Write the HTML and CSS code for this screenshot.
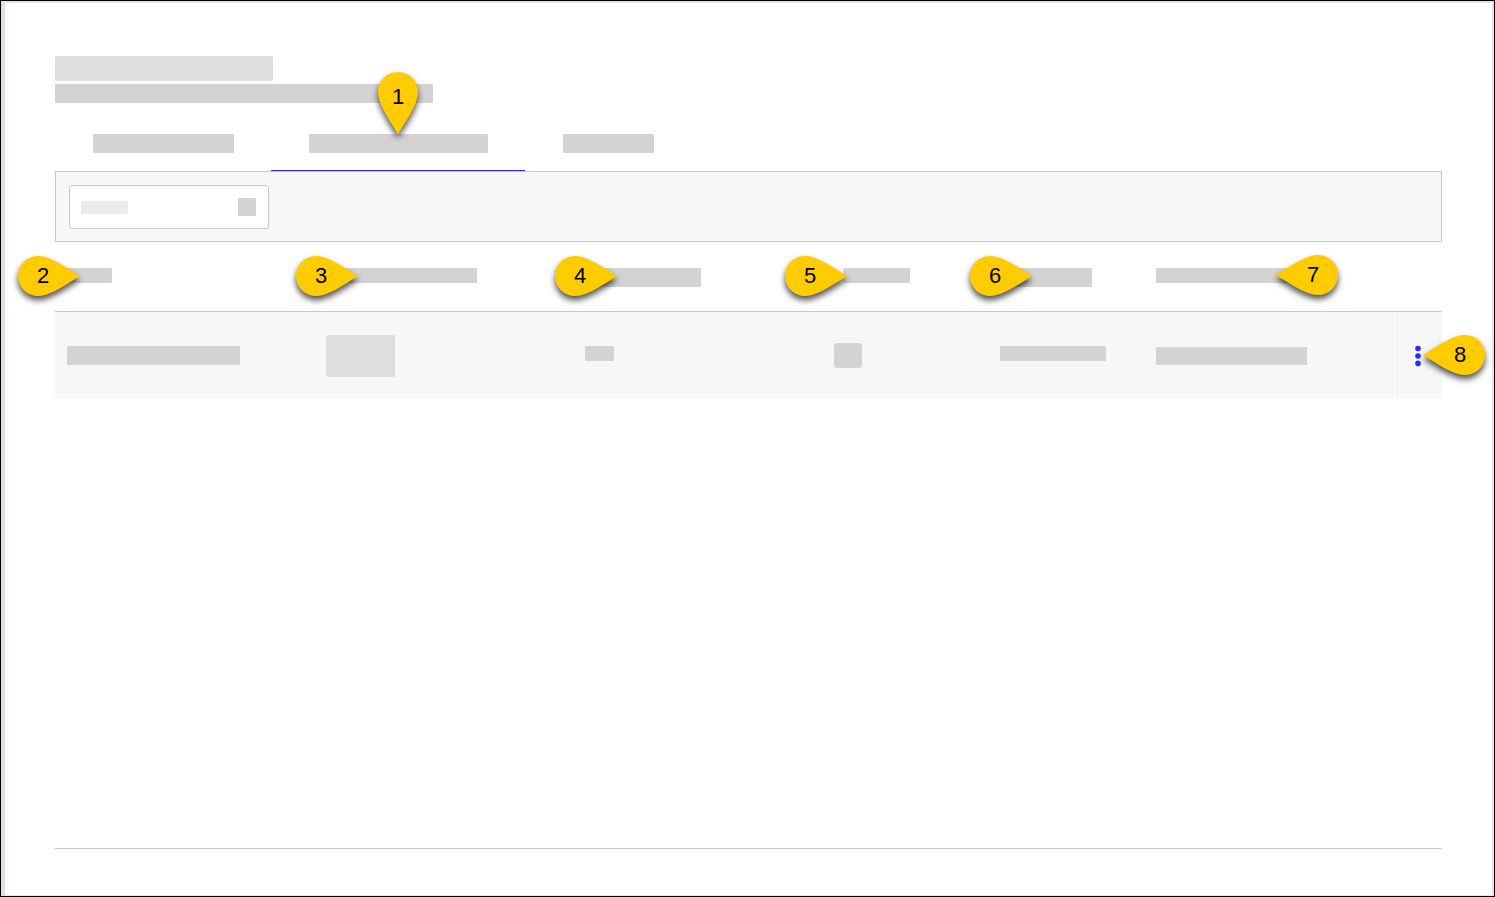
FILE: index.html
```html
<!DOCTYPE html>
<html lang="en">
<head>
  <meta charset="UTF-8" />
  <meta name="viewport" content="width=device-width, initial-scale=1.0" />
  <title>Overview</title>
  <link rel="stylesheet" href="styles.css">
</head>
<body>
  <!-- marker shapes -->
  <svg class="defs" aria-hidden="true">
    <symbol id="pin-right" viewBox="0 0 62 40">
      <path d="M62 20 C42 7 30 0 20 0 A20 20 0 0 0 20 40 C30 40 42 33 62 20Z" />
    </symbol>
    <symbol id="pin-left" viewBox="0 0 62 40">
      <path d="M0 20 C20 7 32 0 42 0 A20 20 0 0 1 42 40 C32 40 20 33 0 20Z" />
    </symbol>
    <symbol id="pin-down" viewBox="0 0 42 62">
      <path d="M21 62 C8 42 1 30 1 20 A20 20 0 0 1 41 20 C41 30 34 42 21 62Z" />
    </symbol>
  </svg>

  <main class="page">
    <header>
      <div class="bar title"></div>
      <div class="bar subtitle"></div>
    </header>

    <nav class="tabs">
      <div class="tab-item">
        <button class="tab" type="button" aria-label="First tab"><span class="bar tab-short"></span></button>
      </div>
      <div class="tab-item">
        <button class="tab active" type="button" aria-label="Second tab"><span class="bar tab-long"></span></button>
        <span class="pin down"><svg><use href="#pin-down" /></svg><b>1</b></span>
      </div>
      <div class="tab-item">
        <button class="tab" type="button" aria-label="Third tab"><span class="bar tab-tiny"></span></button>
      </div>
    </nav>

    <section class="filters">
      <label class="field">
        <span class="bar hint"></span>
        <input type="text" aria-label="Filter" />
        <span class="bar field-icon"></span>
      </label>
    </section>

    <table>
      <colgroup>
        <col class="col-name" />
        <col class="col-type" />
        <col class="col-count" />
        <col class="col-flag" />
        <col class="col-owner" />
        <col />
        <col class="col-menu" />
      </colgroup>
      <thead>
        <tr>
          <th><div class="bar head-name"></div><span class="pin right far"><svg><use href="#pin-right" /></svg><b>2</b></span></th>
          <th><div class="bar head-type"></div><span class="pin right"><svg><use href="#pin-right" /></svg><b>3</b></span></th>
          <th><div class="bar head-count"></div><span class="pin right"><svg><use href="#pin-right" /></svg><b>4</b></span></th>
          <th><div class="bar head-flag"></div><span class="pin right far"><svg><use href="#pin-right" /></svg><b>5</b></span></th>
          <th><div class="bar head-owner"></div><span class="pin right"><svg><use href="#pin-right" /></svg><b>6</b></span></th>
          <th><div class="bar head-date"></div><span class="pin left head-pin"><svg><use href="#pin-left" /></svg><b>7</b></span></th>
          <th></th>
        </tr>
      </thead>
      <tbody>
        <tr>
          <td><div class="bar cell-name"></div></td>
          <td><div class="bar cell-type"></div></td>
          <td><div class="bar cell-count"></div></td>
          <td><div class="bar cell-flag"></div></td>
          <td><div class="bar cell-owner"></div></td>
          <td><div class="bar cell-date"></div></td>
          <td class="menu">
            <button class="menu-button" type="button" aria-label="More actions">
              <svg width="8" height="22" viewBox="0 0 8 22">
                <circle cx="4" cy="3.5" r="2.8" />
                <circle cx="4" cy="11" r="2.8" />
                <circle cx="4" cy="18.4" r="2.8" />
              </svg>
            </button>
            <span class="pin left menu-pin"><svg><use href="#pin-left" /></svg><b>8</b></span>
          </td>
        </tr>
      </tbody>
    </table>

    <hr />
  </main>
</body>
</html>
```

FILE: styles.css
```css
* {
  box-sizing: border-box;
}
body {
  margin: 0;
  min-height: 100vh;
  display: flex;
  border: 1px solid #000;
  font-family: "Liberation Sans", Arial, sans-serif;
  background-color: #fff;
}
.defs {
  position: absolute;
  width: 0;
  height: 0;
}
.page {
  flex: 1;
  display: flex;
  flex-direction: column;
  padding: 53px 50px 46px;
  border: 1px solid #e4e4e4;
  border-width: 2px 2px 1px 4px;
  border-left-color: #e4dfdf;
}

/* placeholder blocks */
.bar {
  display: block;
  height: 15px;
  border-radius: 1px;
  background-color: #d3d3d3;
}
.title {
  width: 218px;
  height: 25px;
  margin-bottom: 3px;
  background-color: #dedede;
}
.subtitle {
  width: 378px;
  height: 19px;
}

/* tabs */
.tabs {
  display: flex;
  margin-top: 13px;
}
.tab-item {
  position: relative;
}
.tab {
  display: block;
  padding: 18px 37px 17px 38px;
  border: none;
  border-bottom: 1px solid transparent;
  background: none;
  cursor: pointer;
}
.tab.active {
  border-bottom-color: #2b2bff;
}
.tab .bar {
  height: 19px;
}
.tab-short {
  width: 141px;
}
.tab-long {
  width: 179px;
}
.tab-tiny {
  width: 91px;
}

/* filters */
.filters {
  padding: 13px 13px 12px;
  border: 1px solid #c8c8c8;
  background-color: #f7f7f7;
}
.field {
  display: flex;
  align-items: center;
  width: 200px;
  height: 44px;
  padding: 0 12px 0 11px;
  border: 1px solid #c8c8c8;
  border-radius: 3px;
  background-color: #fff;
}
.field input {
  flex: 1;
  min-width: 0;
  height: 30px;
  padding: 0;
  border: none;
  outline: none;
  background: none;
}
.hint {
  width: 47px;
  height: 13px;
  background-color: #ebebeb;
}
.field-icon {
  width: 18px;
  height: 18px;
}

/* table */
table {
  width: 100%;
  table-layout: fixed;
  border-spacing: 0;
}
.col-name, .col-type {
  width: 259px;
}
.col-count {
  width: 249px;
}
.col-flag {
  width: 166px;
}
.col-owner {
  width: 156px;
}
.col-menu {
  width: 48px;
}
th, td {
  position: relative;
  padding: 0 0 0 12px;
}
th {
  height: 70px;
  padding-top: 26px;
  vertical-align: top;
  border-bottom: 1px solid #c8c8c8;
}
td {
  height: 87px;
  background-color: #f7f7f7;
}
.head-name {
  width: 45px;
}
.head-type {
  width: 151px;
}
.head-count {
  width: 116px;
  height: 19px;
}
.head-flag {
  width: 67px;
  margin-left: 9px;
}
.head-owner {
  width: 92px;
  height: 19px;
}
.head-date {
  width: 140px;
}
.cell-name {
  width: 173px;
  height: 19px;
}
.cell-type {
  width: 69px;
  height: 42px;
  border-radius: 2px;
  background-color: #dedede;
}
.cell-count, .cell-owner {
  width: 29px;
  margin-bottom: 4px;
}
.cell-flag {
  width: 28px;
  height: 25px;
  border-radius: 3px;
}
.cell-owner {
  width: 106px;
}
.cell-date {
  width: 151px;
  height: 18px;
}
.menu {
  padding: 0 2px 0 0;
  border-left: 1px solid #fff;
}
.menu-button {
  display: block;
  margin: 0 auto;
  padding: 0;
  border: none;
  background: none;
  cursor: pointer;
}
.menu-button svg {
  display: block;
  fill: #2b2bff;
}

/* numbered markers lying over the page */
.pin {
  position: absolute;
  z-index: 1;
  display: flex;
  align-items: center;
  justify-content: center;
  width: 62px;
  height: 40px;
  font-size: 22px;
  line-height: 24px;
  color: #000;
}
.pin svg {
  position: absolute;
  inset: 0;
  width: 100%;
  height: 100%;
  overflow: visible;
  fill: #fc0;
  filter: drop-shadow(0 4px 3px rgba(0, 0, 0, 0.7));
}
.pin b {
  position: relative;
  font-weight: normal;
}
.pin.right {
  top: 14px;
  left: -18px;
  padding-right: 12px;
}
.pin.right.far {
  left: -37px;
}
.pin.left {
  padding-left: 12px;
}
.head-pin {
  top: 13px;
  left: 132px;
}
.menu-pin {
  top: 23px;
  left: 28px;
}
.pin.down {
  left: 50%;
  bottom: 37px;
  width: 42px;
  height: 62px;
  margin-left: -21px;
  padding-bottom: 12px;
}

hr {
  width: 100%;
  margin: auto 0 0;
  border: none;
  border-top: 1px solid #c8c8c8;
}
```
